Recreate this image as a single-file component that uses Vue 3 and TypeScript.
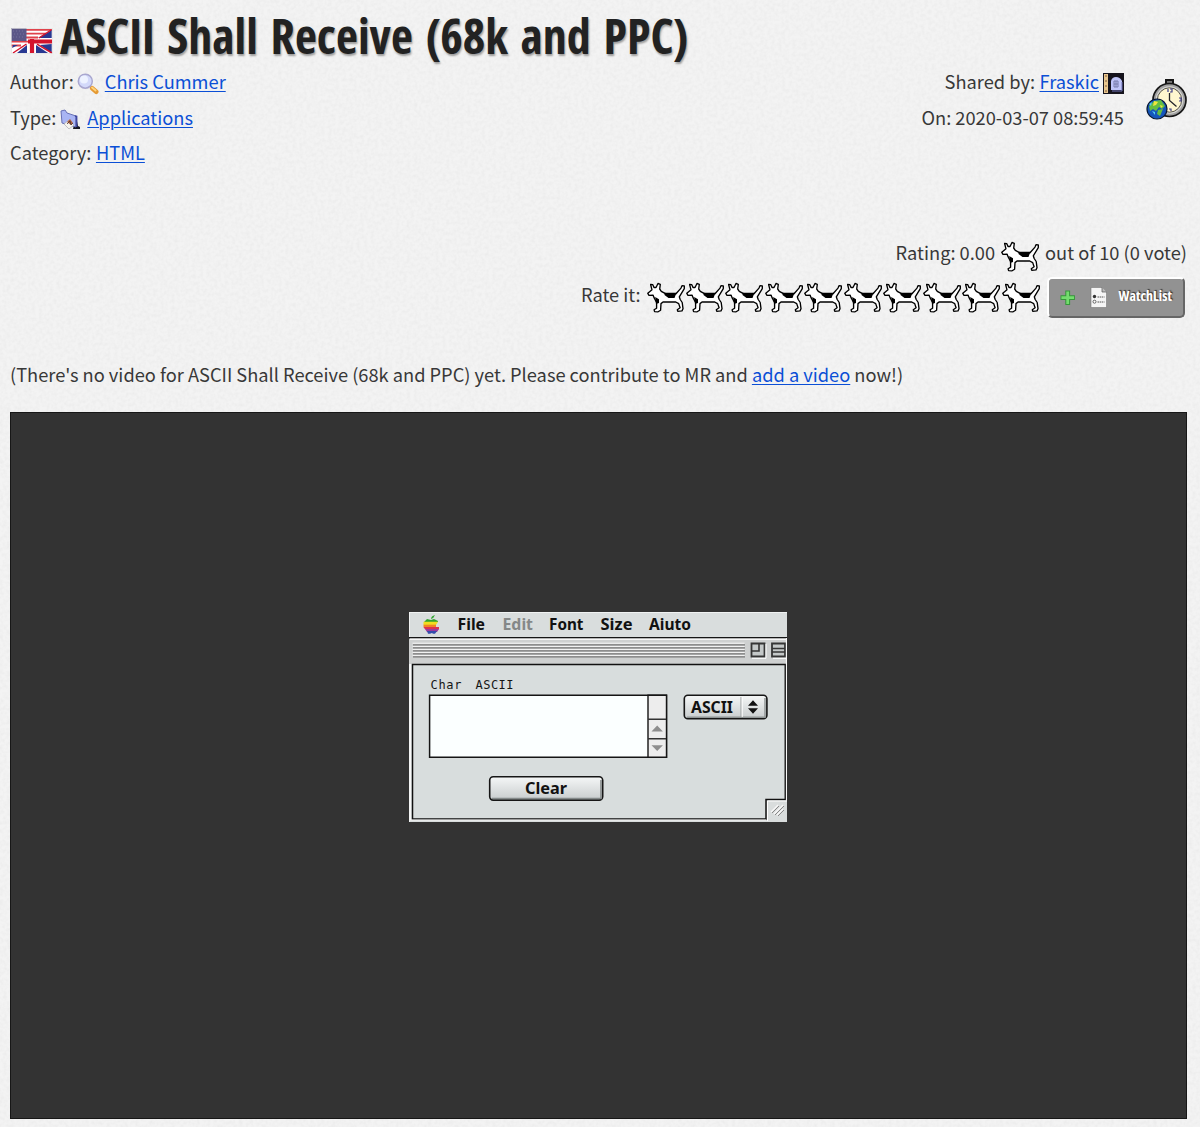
<script setup lang="ts">
interface MenuItem {
  label: string
  x: number
  width: number
  disabled?: boolean
}

const votes: number[] = Array.from({ length: 10 }, (_, i) => i + 1)

const menu: MenuItem[] = [
  { label: 'File', x: 48.5, width: 27.5 },
  { label: 'Edit', x: 93.5, width: 30.5, disabled: true },
  { label: 'Font', x: 140, width: 34.5 },
  { label: 'Size', x: 191.5, width: 32 },
  { label: 'Aiuto', x: 240, width: 42 },
]

const titleStripes: number[] = [33, 36, 39, 42, 45]
</script>

<template>
  <svg width="0" height="0" class="defs" aria-hidden="true">
    <defs>
      <symbol id="dog" viewBox="0 0 38 30">
        <path d="M.8 10.8 5 7.3 3.6 2l2.2.2L7 5h2L11 1l2.3.9-.6 4.6 1.6 2.3 4.2 2.4H29l5-5.6 1-2.4 2.3.3v2.6l-5 8.2.9 2.7 2 3 .8 6.2-1 2.2-4.2.5-.5-1.7 2.8-1.9-1.4-4.2-3-1.6H16l-2 1.6-.4 6.6-2.5 1.6-3.5-.2-.5-1.8 2.5-1.6V20l-2.4-4.6L6 12.6 2 12.8z" fill="#fff" stroke="#000" stroke-width="1.35" stroke-linejoin="round" />
        <path d="M17.5 10.2h12l-2 5.2h-6l-4-2.8zM8.2 14.6l3.8 2.2v3.6l-3 1.2z" fill="#000" />
      </symbol>
    </defs>
  </svg>
  <main class="page">
    <svg class="paper" aria-hidden="true">
      <filter id="grain" x="0" y="0" width="100%" height="100%">
        <feTurbulence type="fractalNoise" baseFrequency="0.28" numOctaves="2" seed="4" />
        <feColorMatrix values="0 0 0 0 .5  0 0 0 0 .5  0 0 0 0 .5  .24 0 0 0 -.085" />
      </filter>
      <rect width="100%" height="100%" filter="url(#grain)" />
    </svg>

    <h1 class="title">
      <svg class="flag" width="42" height="26" viewBox="0 0 42 26">
        <path fill="#fff" d="M0 0h42v26H0z" />
        <path d="M15 1.8h26M15 5.7h20M15 9.5h12M0 13.7h20M0 17.5h10" stroke="#e0424b" stroke-width="1.8" />
        <path fill="#5b5787" d="M0 0h15.5v13H0z" />
        <path d="M2 3h12M3 6h12M2 9h12" stroke="#77739b" stroke-dasharray="1 2" />
        <path fill="#283891" d="M40.7 2v8H28zM40.7 16v9L29 17zM25 17l12 8H25zM16 17v8H6zM1 20l6-3H2zM27 10l8-5v5z" />
        <path d="M21 11v14M17 13.5h24" stroke="#d4142d" stroke-width="4.2" />
        <path d="M40 2 28 10M26 16.2 41 25M15.5 16 2 25" stroke="#d4142d" stroke-width="1.5" />
        <path d="M.4.4h41.2v25.2H.4z" fill="none" stroke="#ddd" stroke-width=".8" />
      </svg>
      <svg class="title-text" width="640" height="64">
        <text x="0" y="53.5" textLength="628.5" lengthAdjust="spacingAndGlyphs">ASCII Shall Receive (68k and PPC)</text>
      </svg>
    </h1>

    <section class="info">
      <div class="facts">
        <p>
          <span>Author:</span>
          <svg class="i-author" width="22" height="22" viewBox="0 0 22 22">
            <path d="m13 13 5 5" stroke="#8b7a79" stroke-width="2" />
            <path d="m15.2 15.2 4 3.5" stroke="#e59a34" stroke-width="4.6" stroke-linecap="round" />
            <path d="m15 14.5 3.6 3" stroke="#ffd47c" stroke-width="1.8" stroke-linecap="round" />
            <circle cx="8.3" cy="8.2" r="7" fill="#d3d9fa" stroke="#a9a7cf" stroke-width="1.5" />
            <circle cx="7" cy="6.4" r="4" fill="#edf2ff" />
          </svg>
          <a href="#">Chris Cummer</a>
        </p>
        <p>
          <span>Type:</span>
          <svg class="i-type" width="21" height="22" viewBox="0 0 21 22">
            <path d="m16 7 2 10 2 1v2h-7z" fill="#171723" />
            <path d="M1 2 5 1l2 3 9 3v11L2 14z" fill="#a9b5f4" stroke="#6770b5" />
            <path d="m15 7 1.5.5V18" stroke="#4148a0" fill="none" stroke-width="1.8" />
            <path d="m4 15 5-4 5 5-5 4z" fill="#f6f4ee" stroke="#a9a9b2" stroke-width=".7" />
            <path d="m7 13 3-3 3 4-2 2z" fill="#ad6343" /><path d="m7 15 3-3 1 4 2-2" fill="none" stroke="#4c3430" stroke-width=".8" />
          </svg>
          <a href="#">Applications</a>
        </p>
        <p><span>Category:</span><a class="category" href="#">HTML</a></p>
      </div>
      <div class="share">
        <div class="share-lines">
          <p>
            <span>Shared by:</span><a class="user" href="#">Fraskic</a>
            <svg class="i-user" width="21" height="21" viewBox="0 0 21 21">
              <path fill="#15131c" d="M0 0h21v21H0z" /><path fill="#e9c78f" d="M1 1h4v19H1z" />
              <path d="M2 3h2M2 8h2M2 13h2M2 18h2" stroke="#7f5c3c" />
              <path fill="#bfc4f8" d="M8 17V8q1-4 5-4t6 4v9z" /><path d="M9 18h10V9" fill="none" stroke="#7175b8" />
              <path d="M11 8h4v6h-4zM13 8v6M11 11h4" stroke="#777aaa" fill="none" />
            </svg>
          </p>
          <p>On: 2020-03-07 08:59:45</p>
        </div>
        <svg class="clock" width="42" height="43" viewBox="0 0 42 43">
          <path d="M20 2h7v4h-7z" fill="#777" stroke="#151515" stroke-width="2" />
          <circle cx="23.5" cy="22" r="16.5" fill="#a0a0a0" stroke="#171717" stroke-width="1.7" />
          <circle cx="23.5" cy="22" r="13.8" fill="#d6d6d2" />
          <circle cx="23.5" cy="22" r="12.2" fill="#fff7cf" stroke="#55534d" />
          <path d="M23.5 15v7.5l7 6" fill="none" stroke="#24242a" stroke-width="1.3" />
          <path d="M22 11v3m2-3h2v3h-2m9 6h2v3h-2M23 31h2v2" fill="none" stroke="#3c3c86" stroke-width="1.2" />
          <circle cx="11" cy="31" r="10" fill="#1455bb" stroke="#071633" stroke-width="1.2" />
          <path d="m8 23 7-1 4 6-3 3-3-2-3 4-3-2-3 2-1-5zM12 32l5-1-3 7-3-2z" fill="#65bd42" />
          <path d="m8 23 4 1-2 3-3 1zM14 27l3 1-2 2z" fill="#f0e63e" />
          <path d="m3 26 3-2-1 4zM6 33l3 1v3z" fill="#57caf0" />
        </svg>
      </div>
    </section>

    <section class="rating">
      <p>
        <span>Rating: 0.00</span>
        <svg class="dog single" width="38" height="31"><use href="#dog" width="38" height="31" /></svg>
        <span>out of 10 (0 vote)</span>
      </p>
      <div class="vote-row">
        <span>Rate it:</span>
        <div class="dogs">
          <svg v-for="vote in votes" :key="vote" class="dog" width="38" height="31"><use href="#dog" width="38" height="31" /></svg>
        </div>
        <button class="watch">
          <svg width="134" height="37" viewBox="0 0 134 37">
            <path d="M18.7 11.5v14.4M11.5 18.7h14.4" stroke="#36973a" stroke-width="4.8" />
            <path d="M18.7 12.4v12.6M12.4 18.7h12.6" stroke="#74dd6e" stroke-width="2.8" />
            <path d="M42 8.5h11l4.5 4.5v15.5H42z" fill="#f5f5f5" stroke="#777" stroke-width=".6" />
            <path d="M53 8.5v4.5h4.5" fill="#bbb" stroke="#555" stroke-width=".7" />
            <circle cx="45.5" cy="17.5" r="1.7" fill="#333" /><circle cx="45.5" cy="22.7" r="1.5" fill="#fff" stroke="#444" stroke-width=".8" />
            <path d="M48.5 18h7M48.5 23h7" stroke="#555" stroke-dasharray="1.5 .6" />
            <text x="69.5" y="21.7" textLength="53.5" lengthAdjust="spacingAndGlyphs">WatchList</text>
          </svg>
        </button>
      </div>
    </section>

    <p class="video">(There's no video for ASCII Shall Receive (68k and PPC) yet. Please contribute to MR and <a href="#">add a video</a> now!)</p>

    <div class="screenshot">
      <svg width="378" height="210" viewBox="0 0 378 210">
        <defs>
          <linearGradient id="face" x2="0" y2="1"><stop stop-color="#f5f7f7" /><stop offset="1" stop-color="#c8cccd" /></linearGradient>
        </defs>
        <path fill="#d9dddd" d="M0 0h378v210H0z" />
        <path d="M0 .5h378M.5 0v210" stroke="#f0f2f2" />
        <g class="mac">
          <text v-for="item in menu" :key="item.label" :x="item.x" y="17.5" :textLength="item.width" lengthAdjust="spacingAndGlyphs" :class="{ disabled: item.disabled }">{{ item.label }}</text>
        </g>
        <!-- six-colour apple menu mark -->
        <path d="M22 7q0-3 4-4-1 3-4 4M15 10l3-3 4 1 3-1 4 2v1z" fill="#31a52f" />
        <path d="M14.5 9.7h14.5l-2 3.3H14.5z" fill="#f1dc20" /><path d="M14.5 12.7H27v2.6H14.5z" fill="#f18424" /><path d="M14.5 15H30v2.2H16z" fill="#dc3151" /><path d="M16 17h14l-2 3H18z" fill="#9c399b" /><path d="M18 19h10l-2 2.7h-2l-1-.8-2 .8h-2z" fill="#334dac" />

        <path fill="#ced0d0" d="M0 26h378v26H0z" />
        <path d="M0 25.7h378" stroke="#151515" stroke-width="1.6" /><path d="M1 27.3h377" stroke="#f6f6f6" stroke-width="1.4" />
        <path d="M3.5 31.2h332M3.5 34.4h332M3.5 37.4h332M3.5 40.4h332M3.5 43.4h332" stroke="#f6f6f6" />
        <path v-for="y in titleStripes" :key="y" :d="`M4 ${y - .1}h332`" stroke="#777" stroke-width="1.2" />
        <path d="M342.5 31.5h13v13h-13zM363 31.5h13v13h-13z" fill="#c4c8c8" stroke="#353535" stroke-width="1.8" />
        <path d="M350 31v8h-8M363 36.5h13M363 40h13" fill="none" stroke="#353535" stroke-width="1.6" />
        <path d="M343 46.3h14V32M364 46.3h13" fill="none" stroke="#fff" />

        <path d="M3.5 52.5h372.8v135H357v19.4H3.5z" fill="#d8dddd" stroke="#111" stroke-width="1.5" />
        <path d="M377.5 26v162M1.5 52v156H357" fill="none" stroke="#f8f8f8" stroke-width="1.2" />
        <path d="M358.5 209v-20H378" fill="none" stroke="#fff" />
        <path d="m362 200 7-7m-4 9 9-9m-6 10 6-6" stroke="#f8f8f8" stroke-width="1.2" /><path d="m363 201 7-7m-4 9 9-9m-6 10 6-6" stroke="#888" />

        <g class="mono">
          <text x="21.5" y="77" textLength="31">Char</text>
          <text x="66.5" y="77" textLength="38">ASCII</text>
        </g>
        <path d="M20.6 83.2h236.9v62.1H20.6z" fill="#fbffff" stroke="#151515" stroke-width="1.5" />
        <path d="M239 83.2h18.5v62.1H239z" fill="#ededed" stroke="#151515" stroke-width="1.4" />
        <path d="M239 107.3h18M239 126.7h18" stroke="#333" stroke-width="1.4" />
        <path d="m242.5 119.5 5.7-6 5.7 6zM242.5 133.2h11.4l-5.7 5.8z" fill="#8e8e8e" />

        <rect x="275.3" y="83.3" width="82.6" height="23.5" rx="3.5" fill="url(#face)" stroke="#161616" stroke-width="1.6" />
        <path d="M278 105.2h78V86" fill="none" stroke="#919696" stroke-width="1.5" />
        <path d="M332 85v20" stroke="#9b9f9f" /><path d="M333.2 85v20" stroke="#fff" />
        <path d="m339 93.7 5-5.4 5 5.4zm0 2.6h10l-5 5.4z" fill="#111" />
        <rect x="80.7" y="164.7" width="113" height="23.4" rx="3.5" fill="url(#face)" stroke="#161616" stroke-width="1.6" />
        <path d="M83 186.5h109V168" fill="none" stroke="#858a8a" stroke-width="1.6" />
        <g class="mac">
          <text x="282" y="100.5" textLength="42" lengthAdjust="spacingAndGlyphs">ASCII</text>
          <text x="116" y="181.7" textLength="42" lengthAdjust="spacingAndGlyphs">Clear</text>
        </g>
      </svg>
    </div>
  </main>
</template>

<style>
html, body { margin: 0; background: #f1f1f1; }
</style>

<style scoped>
.defs { position: absolute; }
.page { position: relative; width: 1200px; height: 1127px; box-sizing: border-box; overflow: hidden; padding: 0 12px 0 10px; background: #f3f3f3; color: #383838; font: 18.25px/35.7px "Noto Sans CJK SC", sans-serif; }
.paper { position: absolute; inset: 0; width: 100%; height: 100%; z-index: 0; }
.page > :not(.paper) { position: relative; z-index: 1; }
p { margin: 0; }
a { color: #0b4fd6; text-decoration: underline; text-decoration-thickness: 1px; text-underline-offset: 2px; }
.title { display: flex; height: 64px; margin: 0; }
.flag { margin: 28px 7px 0 0.5px; flex: none; }
.title-text { overflow: visible; font: 700 48px "Open Sans", sans-serif; font-stretch: 75%; word-spacing: 4px; fill: #222; text-shadow: 1px 2px 2px rgba(0, 0, 0, .35); }
.info { display: flex; justify-content: space-between; height: 171px; }
.facts p, .share p { display: flex; align-items: center; height: 35.7px; white-space: pre; }
.i-author { margin: 4px 6px 0 3px; }
.i-type { margin: 4px 6px 0 4px; }
.category { margin-left: 4.5px; }
.user { margin-left: 4.5px; }
.share { display: flex; }
.share-lines p { justify-content: flex-end; }
.i-user { margin: 3px 0 0 4px; }
.clock { margin: 14px 0 0 22px; }
.rating { height: 122px; }
.rating p, .vote-row { display: flex; justify-content: flex-end; align-items: center; height: 36px; }
.rating p { margin-right: 1px; }
.single { margin: 6px 6px 0; }
.vote-row { height: 42px; margin-top: 5px; }
.vote-row > span { margin: -5px 6px 0 0; }
.dogs { display: flex; gap: 1.44px; margin-top: 1px; }
.dog { display: block; }
.watch { width: 138px; height: 41px; box-sizing: border-box; margin: 0 3px 0 7.5px; padding: 0; border: 2px solid; border-color: #fff #666 #666 #fff; border-radius: 5px; background: #929292; }
.watch svg { display: block; }
.watch text { font: 700 14px "Open Sans", sans-serif; font-stretch: 75%; fill: #fff; text-shadow: 1px -1px 1px #333; }
.video { height: 55px; white-space: nowrap; }
.screenshot { width: 1177px; height: 707px; box-sizing: border-box; border: 1px solid #171717; background: #333; padding: 199px 0 0 398px; }
.screenshot svg { display: block; }
.mac { font: 700 16px "Noto Sans", sans-serif; fill: #111; }
.mac .disabled { fill: #858888; }
.mono { font: 12px "DejaVu Sans Mono", monospace; fill: #151515; }
</style>
